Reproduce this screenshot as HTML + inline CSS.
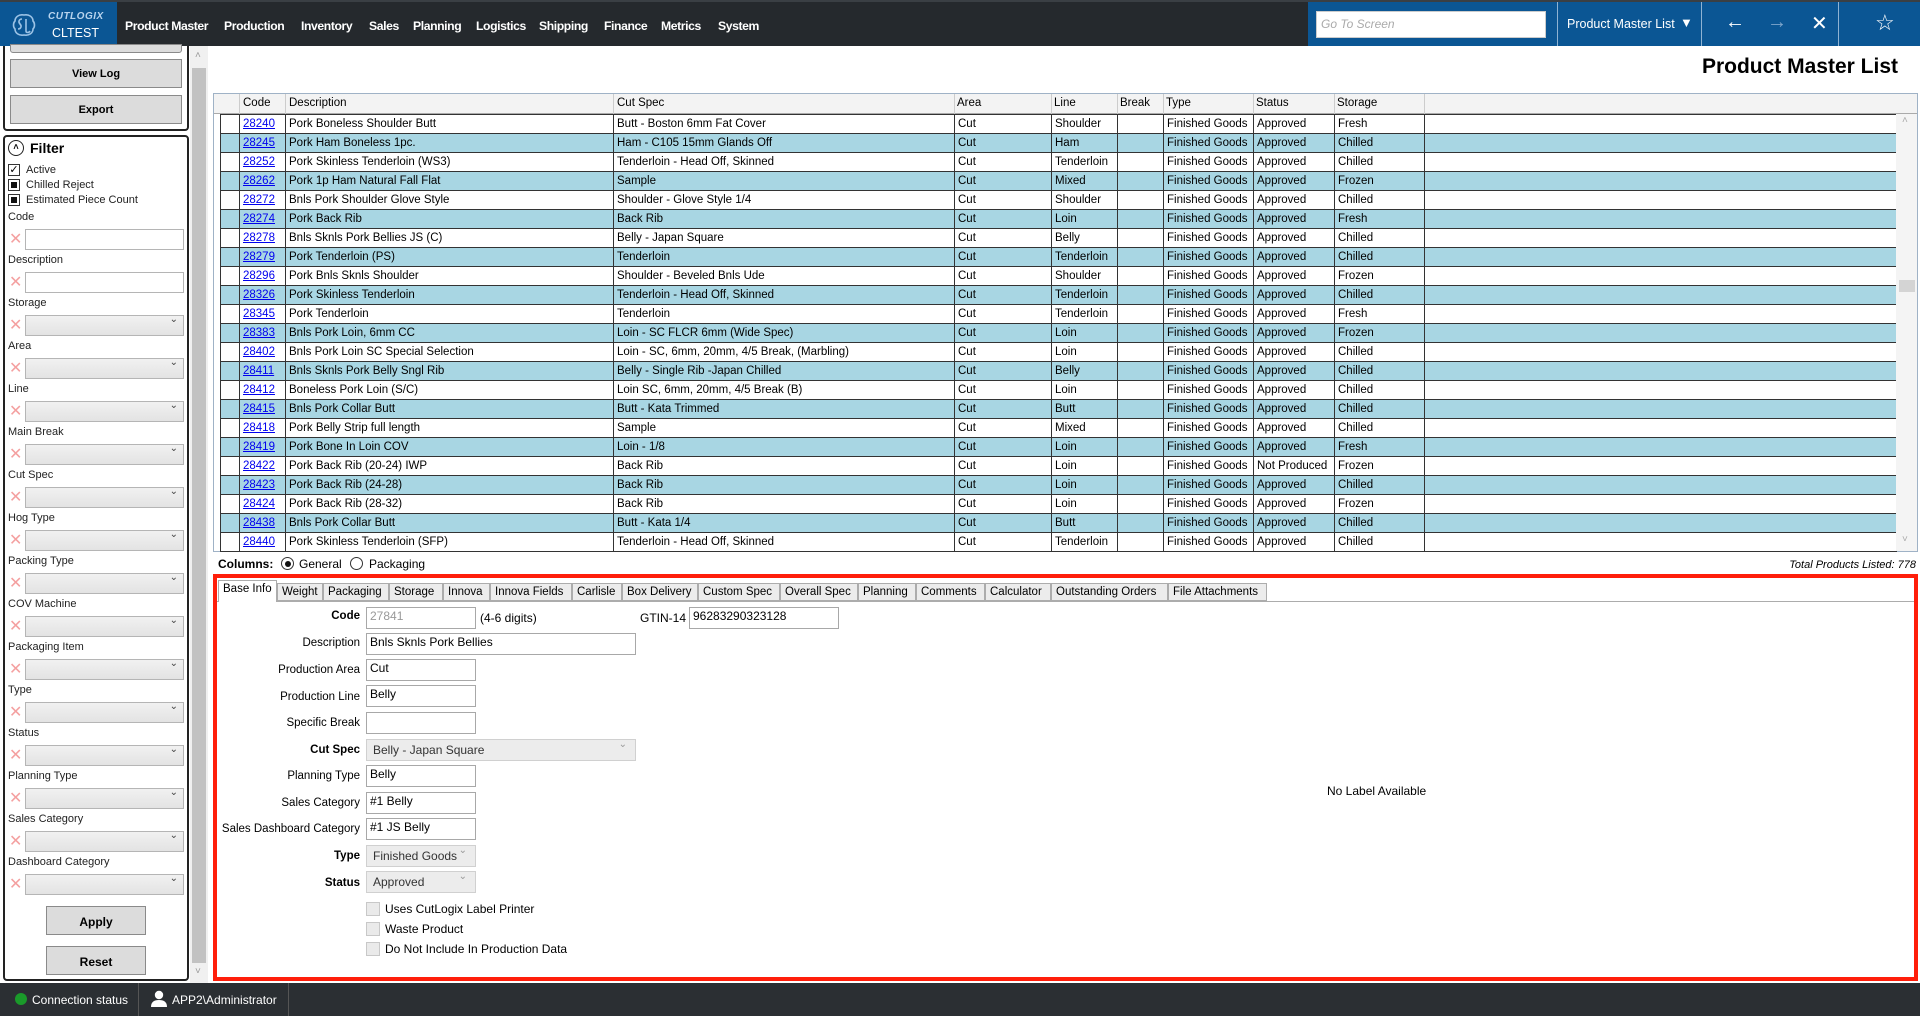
<!DOCTYPE html>
<html><head><meta charset="utf-8">
<style>
*{box-sizing:border-box;margin:0;padding:0}
body{width:1920px;height:1016px;overflow:hidden;background:#fff;font-family:"Liberation Sans",sans-serif;font-size:12px;color:#000;position:relative}
.a{position:absolute}
#hdr{left:0;top:0;width:1920px;height:46px;background:#25292d;border-top:2px solid #3a3f44}
.nav{position:absolute;top:17px;color:#fff;font-weight:bold;font-size:12.2px;letter-spacing:-0.4px}
.sep{position:absolute;top:0;width:1px;height:44px;background:#8fb3d3}
.btn{position:absolute;background:#dcdcdc;border:1px solid #8a8a8a;font-weight:bold;font-size:11px;text-align:center}
.flab{position:absolute;left:8px;font-size:11px;color:#222}
.fx{position:absolute;left:9px;color:#f4a0a0;font-size:16px;line-height:16px}
.fin{position:absolute;left:25px;width:159px;height:21px;border:1px solid #b5b5b5;background:#fff}
.fdd{background:linear-gradient(#f1f1f1,#e3e3e3)}
.fdd:after{content:"\2304";position:absolute;right:5px;top:-2px;font-size:10px;color:#444}
table.g{border-collapse:collapse;table-layout:fixed;position:absolute;left:220px;top:114px;font-size:11.5px}
table.g td{height:19px;border:1px solid #333;padding:0 3px;white-space:nowrap;overflow:hidden;line-height:17px}
table.g tr.b td{background:#a8d6e3}
table.g td.c a{color:#0000ee;text-decoration:underline}
.hd{position:absolute;top:97px;font-size:11.5px}
.tab{position:absolute;top:583px;height:18px;border:1px solid #acacac;background:#ececec;font-size:11.5px;padding:2px 4px 0 4px;white-space:nowrap}
.lbl{position:absolute;right:1560px;font-size:11.5px;text-align:right;white-space:nowrap}
.inp{position:absolute;left:366px;height:22px;border:1px solid #a8a8a8;background:#fff;font-size:12px;padding:1px 3px}
.dd{background:#ececec;border-color:#d0d0d0;color:#333;padding-left:6px}
.dd:after{content:"\2304";position:absolute;right:8px;top:-1px;font-size:10px;color:#999}
.cb{position:absolute;left:366px;width:14px;height:14px;border:1px solid #c8c8c8;background:#eaeaea}
.cbl{position:absolute;left:385px;font-size:12px}
</style></head><body>

<div id="hdr" class="a">
  <div class="a" style="left:0;top:0;width:117px;height:44px;background:#0b5694"></div>
  <svg class="a" style="left:11px;top:10px" width="26" height="26" viewBox="0 0 26 26" fill="none" stroke="#9cc3e6" stroke-width="1.6"><path d="M13 3C8 2 4 5 4 9c-2 2-2 6 0 8 0 4 4 7 9 6 5 1 9-2 9-6 2-2 2-6 0-8 0-4-4-7-9-6z"/><path d="M11 7c-3 0-4 3-2 5s1 5-2 5M15 7v12c0 2 3 2 4 0"/></svg>
  <div class="a" style="left:48px;top:9px;color:#b8d4ee;font-weight:bold;font-style:italic;font-size:10px;letter-spacing:0.5px">CUTLOGIX</div>
  <div class="a" style="left:52px;top:24px;color:#fff;font-size:12.5px">CLTEST</div>
  <div class="nav" style="left:125px">Product Master</div>
  <div class="nav" style="left:224px">Production</div>
  <div class="nav" style="left:301px">Inventory</div>
  <div class="nav" style="left:369px">Sales</div>
  <div class="nav" style="left:413px">Planning</div>
  <div class="nav" style="left:476px">Logistics</div>
  <div class="nav" style="left:539px">Shipping</div>
  <div class="nav" style="left:604px">Finance</div>
  <div class="nav" style="left:661px">Metrics</div>
  <div class="nav" style="left:718px">System</div>
  <div class="a" style="left:1308px;top:0;width:612px;height:44px;background:#0b5694"></div>
  <div class="a" style="left:1316px;top:9px;width:230px;height:27px;background:#fff;border:1px solid #ccc;color:#aaa;font-style:italic;font-size:12px;padding:5px 4px">Go To Screen</div>
  <div class="sep" style="left:1557px"></div>
  <div class="a" style="left:1567px;top:15px;color:#fff;font-size:12.5px">Product Master List</div>
  <div class="a" style="left:1680px;top:13px;color:#fff;font-size:13px">&#9660;</div>
  <div class="sep" style="left:1701px"></div>
  <div class="a" style="left:1725px;top:9px;color:#fff;font-size:20px">&#8592;</div>
  <div class="a" style="left:1767px;top:9px;color:#7fa6cc;font-size:20px">&#8594;</div>
  <div class="a" style="left:1811px;top:9px;color:#fff;font-size:20px">&#10005;</div>
  <div class="sep" style="left:1838px"></div>
  <div class="a" style="left:1875px;top:8px;color:#fff;font-size:22px">&#9734;</div>
</div>

<!-- sidebar -->
<div class="a" style="left:0;top:46px;width:190px;height:937px;background:#fff"></div>
<div class="a" style="left:3px;top:46px;width:186px;height:85px;border-left:2px solid #222;border-right:2px solid #222;border-bottom:2px solid #222;border-radius:0 0 4px 4px"></div>
<div class="btn" style="left:10px;top:44px;width:172px;height:9px;border-radius:0 0 3px 3px"></div>
<div class="btn" style="left:10px;top:59px;width:172px;height:29px;padding-top:8px">View Log</div>
<div class="btn" style="left:10px;top:95px;width:172px;height:29px;padding-top:8px">Export</div>
<div class="a" style="left:3px;top:135px;width:186px;height:846px;border:2px solid #222;border-radius:4px"></div>
<div class="a" style="left:8px;top:140px;width:16px;height:16px;border:1.5px solid #222;border-radius:50%;font-size:9px;text-align:center;line-height:13px;font-weight:bold">&#708;</div>
<div class="a" style="left:30px;top:140px;font-weight:bold;font-size:14px">Filter</div>
<div class="a" style="left:8px;top:164px;width:12px;height:12px;border:1px solid #333;font-size:11px;line-height:10px;text-align:center">&#10003;</div>
<div class="flab" style="left:26px;top:164px">Active</div>
<div class="a" style="left:8px;top:179px;width:12px;height:12px;border:1px solid #333;background:#fff"><div style="margin:2px;width:6px;height:6px;background:#111"></div></div>
<div class="flab" style="left:26px;top:179px">Chilled Reject</div>
<div class="a" style="left:8px;top:194px;width:12px;height:12px;border:1px solid #333;background:#fff"><div style="margin:2px;width:6px;height:6px;background:#111"></div></div>
<div class="flab" style="left:26px;top:194px">Estimated Piece Count</div>

<div class="flab" style="top:211px">Code</div><div class="fx" style="top:232px">&#10005;</div><div class="fin" style="top:229px"></div>
<div class="flab" style="top:254px">Description</div><div class="fx" style="top:275px">&#10005;</div><div class="fin" style="top:272px"></div>
<div class="flab" style="top:297px">Storage</div><div class="fx" style="top:318px">&#10005;</div><div class="fin fdd" style="top:315px"></div>
<div class="flab" style="top:340px">Area</div><div class="fx" style="top:361px">&#10005;</div><div class="fin fdd" style="top:358px"></div>
<div class="flab" style="top:383px">Line</div><div class="fx" style="top:404px">&#10005;</div><div class="fin fdd" style="top:401px"></div>
<div class="flab" style="top:426px">Main Break</div><div class="fx" style="top:447px">&#10005;</div><div class="fin fdd" style="top:444px"></div>
<div class="flab" style="top:469px">Cut Spec</div><div class="fx" style="top:490px">&#10005;</div><div class="fin fdd" style="top:487px"></div>
<div class="flab" style="top:512px">Hog Type</div><div class="fx" style="top:533px">&#10005;</div><div class="fin fdd" style="top:530px"></div>
<div class="flab" style="top:555px">Packing Type</div><div class="fx" style="top:576px">&#10005;</div><div class="fin fdd" style="top:573px"></div>
<div class="flab" style="top:598px">COV Machine</div><div class="fx" style="top:619px">&#10005;</div><div class="fin fdd" style="top:616px"></div>
<div class="flab" style="top:641px">Packaging Item</div><div class="fx" style="top:662px">&#10005;</div><div class="fin fdd" style="top:659px"></div>
<div class="flab" style="top:684px">Type</div><div class="fx" style="top:705px">&#10005;</div><div class="fin fdd" style="top:702px"></div>
<div class="flab" style="top:727px">Status</div><div class="fx" style="top:748px">&#10005;</div><div class="fin fdd" style="top:745px"></div>
<div class="flab" style="top:770px">Planning Type</div><div class="fx" style="top:791px">&#10005;</div><div class="fin fdd" style="top:788px"></div>
<div class="flab" style="top:813px">Sales Category</div><div class="fx" style="top:834px">&#10005;</div><div class="fin fdd" style="top:831px"></div>
<div class="flab" style="top:856px">Dashboard Category</div><div class="fx" style="top:877px">&#10005;</div><div class="fin fdd" style="top:874px"></div>
<div class="btn" style="left:46px;top:906px;width:100px;height:29px;padding-top:8px;font-size:12px">Apply</div>
<div class="btn" style="left:46px;top:946px;width:100px;height:29px;padding-top:8px;font-size:12px">Reset</div>
<!-- sidebar scrollbar -->
<div class="a" style="left:190px;top:46px;width:18px;height:937px;background:#f0f0f0"></div>
<div class="a" style="left:192px;top:68px;width:14px;height:895px;background:#c2c2c2"></div>
<div class="a" style="left:195px;top:50px;color:#999;font-size:10px">&#708;</div>
<div class="a" style="left:195px;top:966px;color:#999;font-size:10px">&#709;</div>

<!-- title -->
<div class="a" style="right:22px;top:55px;font-weight:bold;font-size:21px">Product Master List</div>

<!-- grid -->
<div class="a" style="left:213px;top:93px;width:1705px;height:459px;border:1px solid #9fb2c6"></div>
<div class="a" style="left:214px;top:94px;width:1703px;height:20px;background:#f3f3f3;border-bottom:1px solid #aaa"></div>
<div class="a" style="left:239px;top:94px;width:1px;height:20px;background:#ccc"></div>
<div class="a" style="left:285px;top:94px;width:1px;height:20px;background:#ccc"></div>
<div class="a" style="left:613px;top:94px;width:1px;height:20px;background:#ccc"></div>
<div class="a" style="left:954px;top:94px;width:1px;height:20px;background:#ccc"></div>
<div class="a" style="left:1051px;top:94px;width:1px;height:20px;background:#ccc"></div>
<div class="a" style="left:1117px;top:94px;width:1px;height:20px;background:#ccc"></div>
<div class="a" style="left:1163px;top:94px;width:1px;height:20px;background:#ccc"></div>
<div class="a" style="left:1253px;top:94px;width:1px;height:20px;background:#ccc"></div>
<div class="a" style="left:1334px;top:94px;width:1px;height:20px;background:#ccc"></div>
<div class="a" style="left:1424px;top:94px;width:1px;height:20px;background:#ccc"></div>
<div class="hd" style="left:243px">Code</div>
<div class="hd" style="left:289px">Description</div>
<div class="hd" style="left:617px">Cut Spec</div>
<div class="hd" style="left:957px">Area</div>
<div class="hd" style="left:1054px">Line</div>
<div class="hd" style="left:1120px">Break</div>
<div class="hd" style="left:1166px">Type</div>
<div class="hd" style="left:1256px">Status</div>
<div class="hd" style="left:1337px">Storage</div>
<table class="g">
<colgroup><col style="width:19px"><col style="width:46px"><col style="width:328px"><col style="width:341px"><col style="width:97px"><col style="width:66px"><col style="width:46px"><col style="width:90px"><col style="width:81px"><col style="width:90px"><col style="width:472px"></colgroup>
<tr><td></td><td class="c"><a>28240</a></td><td>Pork Boneless Shoulder Butt</td><td>Butt - Boston 6mm Fat Cover</td><td>Cut</td><td>Shoulder</td><td></td><td>Finished Goods</td><td>Approved</td><td>Fresh</td><td></td></tr>
<tr class="b"><td></td><td class="c"><a>28245</a></td><td>Pork Ham Boneless 1pc.</td><td>Ham - C105 15mm Glands Off</td><td>Cut</td><td>Ham</td><td></td><td>Finished Goods</td><td>Approved</td><td>Chilled</td><td></td></tr>
<tr><td></td><td class="c"><a>28252</a></td><td>Pork Skinless Tenderloin (WS3)</td><td>Tenderloin - Head Off, Skinned</td><td>Cut</td><td>Tenderloin</td><td></td><td>Finished Goods</td><td>Approved</td><td>Chilled</td><td></td></tr>
<tr class="b"><td></td><td class="c"><a>28262</a></td><td>Pork 1p Ham Natural Fall Flat</td><td>Sample</td><td>Cut</td><td>Mixed</td><td></td><td>Finished Goods</td><td>Approved</td><td>Frozen</td><td></td></tr>
<tr><td></td><td class="c"><a>28272</a></td><td>Bnls Pork Shoulder Glove Style</td><td>Shoulder - Glove Style 1/4</td><td>Cut</td><td>Shoulder</td><td></td><td>Finished Goods</td><td>Approved</td><td>Chilled</td><td></td></tr>
<tr class="b"><td></td><td class="c"><a>28274</a></td><td>Pork Back Rib</td><td>Back Rib</td><td>Cut</td><td>Loin</td><td></td><td>Finished Goods</td><td>Approved</td><td>Fresh</td><td></td></tr>
<tr><td></td><td class="c"><a>28278</a></td><td>Bnls Sknls Pork Bellies JS (C)</td><td>Belly - Japan Square</td><td>Cut</td><td>Belly</td><td></td><td>Finished Goods</td><td>Approved</td><td>Chilled</td><td></td></tr>
<tr class="b"><td></td><td class="c"><a>28279</a></td><td>Pork Tenderloin (PS)</td><td>Tenderloin</td><td>Cut</td><td>Tenderloin</td><td></td><td>Finished Goods</td><td>Approved</td><td>Chilled</td><td></td></tr>
<tr><td></td><td class="c"><a>28296</a></td><td>Pork Bnls Sknls Shoulder</td><td>Shoulder - Beveled Bnls Ude</td><td>Cut</td><td>Shoulder</td><td></td><td>Finished Goods</td><td>Approved</td><td>Frozen</td><td></td></tr>
<tr class="b"><td></td><td class="c"><a>28326</a></td><td>Pork Skinless Tenderloin</td><td>Tenderloin - Head Off, Skinned</td><td>Cut</td><td>Tenderloin</td><td></td><td>Finished Goods</td><td>Approved</td><td>Chilled</td><td></td></tr>
<tr><td></td><td class="c"><a>28345</a></td><td>Pork Tenderloin</td><td>Tenderloin</td><td>Cut</td><td>Tenderloin</td><td></td><td>Finished Goods</td><td>Approved</td><td>Fresh</td><td></td></tr>
<tr class="b"><td></td><td class="c"><a>28383</a></td><td>Bnls Pork Loin, 6mm CC</td><td>Loin - SC FLCR 6mm (Wide Spec)</td><td>Cut</td><td>Loin</td><td></td><td>Finished Goods</td><td>Approved</td><td>Frozen</td><td></td></tr>
<tr><td></td><td class="c"><a>28402</a></td><td>Bnls Pork Loin SC Special Selection</td><td>Loin - SC, 6mm, 20mm, 4/5 Break, (Marbling)</td><td>Cut</td><td>Loin</td><td></td><td>Finished Goods</td><td>Approved</td><td>Chilled</td><td></td></tr>
<tr class="b"><td></td><td class="c"><a>28411</a></td><td>Bnls Sknls Pork Belly Sngl Rib</td><td>Belly - Single Rib -Japan Chilled</td><td>Cut</td><td>Belly</td><td></td><td>Finished Goods</td><td>Approved</td><td>Chilled</td><td></td></tr>
<tr><td></td><td class="c"><a>28412</a></td><td>Boneless Pork Loin (S/C)</td><td>Loin SC, 6mm, 20mm, 4/5 Break (B)</td><td>Cut</td><td>Loin</td><td></td><td>Finished Goods</td><td>Approved</td><td>Chilled</td><td></td></tr>
<tr class="b"><td></td><td class="c"><a>28415</a></td><td>Bnls Pork Collar Butt</td><td>Butt - Kata Trimmed</td><td>Cut</td><td>Butt</td><td></td><td>Finished Goods</td><td>Approved</td><td>Chilled</td><td></td></tr>
<tr><td></td><td class="c"><a>28418</a></td><td>Pork Belly Strip full length</td><td>Sample</td><td>Cut</td><td>Mixed</td><td></td><td>Finished Goods</td><td>Approved</td><td>Chilled</td><td></td></tr>
<tr class="b"><td></td><td class="c"><a>28419</a></td><td>Pork Bone In Loin COV</td><td>Loin - 1/8</td><td>Cut</td><td>Loin</td><td></td><td>Finished Goods</td><td>Approved</td><td>Fresh</td><td></td></tr>
<tr><td></td><td class="c"><a>28422</a></td><td>Pork Back Rib (20-24) IWP</td><td>Back Rib</td><td>Cut</td><td>Loin</td><td></td><td>Finished Goods</td><td>Not Produced</td><td>Frozen</td><td></td></tr>
<tr class="b"><td></td><td class="c"><a>28423</a></td><td>Pork Back Rib (24-28)</td><td>Back Rib</td><td>Cut</td><td>Loin</td><td></td><td>Finished Goods</td><td>Approved</td><td>Chilled</td><td></td></tr>
<tr><td></td><td class="c"><a>28424</a></td><td>Pork Back Rib (28-32)</td><td>Back Rib</td><td>Cut</td><td>Loin</td><td></td><td>Finished Goods</td><td>Approved</td><td>Frozen</td><td></td></tr>
<tr class="b"><td></td><td class="c"><a>28438</a></td><td>Bnls Pork Collar Butt</td><td>Butt - Kata 1/4</td><td>Cut</td><td>Butt</td><td></td><td>Finished Goods</td><td>Approved</td><td>Chilled</td><td></td></tr>
<tr><td></td><td class="c"><a>28440</a></td><td>Pork Skinless Tenderloin (SFP)</td><td>Tenderloin - Head Off, Skinned</td><td>Cut</td><td>Tenderloin</td><td></td><td>Finished Goods</td><td>Approved</td><td>Chilled</td><td></td></tr>
</table>
<div class="a" style="left:1896px;top:114px;width:21px;height:437px;background:#f4f4f4"></div>
<div class="a" style="left:1899px;top:280px;width:16px;height:12px;background:#d4d4d4"></div>
<div class="a" style="left:1902px;top:115px;color:#aaa;font-size:10px">&#708;</div>
<div class="a" style="left:1902px;top:534px;color:#aaa;font-size:10px">&#709;</div>

<!-- columns row -->
<div class="a" style="left:218px;top:557px;font-weight:bold;font-size:12px">Columns:</div>
<div class="a" style="left:281px;top:557px;width:13px;height:13px;border:1px solid #333;border-radius:50%"><div style="margin:2.5px;width:6px;height:6px;border-radius:50%;background:#111"></div></div>
<div class="a" style="left:299px;top:557px;font-size:12px">General</div>
<div class="a" style="left:350px;top:557px;width:13px;height:13px;border:1px solid #333;border-radius:50%"></div>
<div class="a" style="left:369px;top:557px;font-size:12px">Packaging</div>
<div class="a" style="right:4px;top:559px;font-style:italic;font-size:11px">Total Products Listed: 778</div>

<!-- detail box -->
<div class="a" style="left:213px;top:574px;width:1705px;height:407px;border:4px solid #ff1e0a"></div>
<div class="a" style="left:217px;top:601px;width:1697px;height:1px;background:#acacac"></div>
<div class="tab" style="left:218px;top:580px;height:22px;width:59px;background:#fff;border-bottom:none">Base Info</div>
<div class="tab" style="left:277px;width:46px">Weight</div>
<div class="tab" style="left:323px;width:66px">Packaging</div>
<div class="tab" style="left:389px;width:54px">Storage</div>
<div class="tab" style="left:443px;width:47px">Innova</div>
<div class="tab" style="left:490px;width:82px">Innova Fields</div>
<div class="tab" style="left:572px;width:50px">Carlisle</div>
<div class="tab" style="left:622px;width:76px">Box Delivery</div>
<div class="tab" style="left:698px;width:82px">Custom Spec</div>
<div class="tab" style="left:780px;width:78px">Overall Spec</div>
<div class="tab" style="left:858px;width:58px">Planning</div>
<div class="tab" style="left:916px;width:69px">Comments</div>
<div class="tab" style="left:985px;width:66px">Calculator</div>
<div class="tab" style="left:1051px;width:117px">Outstanding Orders</div>
<div class="tab" style="left:1168px;width:99px">File Attachments</div>

<div class="lbl" style="top:610px;font-weight:bold">Code</div>
<div class="inp" style="top:607px;width:110px;color:#999">27841</div>
<div class="a" style="left:480px;top:611px;font-size:12px">(4-6 digits)</div>
<div class="a" style="left:640px;top:611px;font-size:12px">GTIN-14</div>
<div class="inp" style="left:689px;top:607px;width:150px">96283290323128</div>
<div class="lbl" style="top:637px">Description</div>
<div class="inp" style="top:633px;width:270px">Bnls Sknls Pork Bellies</div>
<div class="lbl" style="top:664px">Production Area</div>
<div class="inp" style="top:659px;width:110px">Cut</div>
<div class="lbl" style="top:691px">Production Line</div>
<div class="inp" style="top:685px;width:110px">Belly</div>
<div class="lbl" style="top:717px">Specific Break</div>
<div class="inp" style="top:712px;width:110px"></div>
<div class="lbl" style="top:744px;font-weight:bold">Cut Spec</div>
<div class="inp dd" style="top:739px;width:270px;padding-top:3px">Belly - Japan Square</div>
<div class="lbl" style="top:770px">Planning Type</div>
<div class="inp" style="top:765px;width:110px">Belly</div>
<div class="lbl" style="top:797px">Sales Category</div>
<div class="inp" style="top:792px;width:110px">#1 Belly</div>
<div class="lbl" style="top:823px">Sales Dashboard Category</div>
<div class="inp" style="top:818px;width:110px">#1 JS Belly</div>
<div class="lbl" style="top:850px;font-weight:bold">Type</div>
<div class="inp dd" style="top:845px;width:110px;padding-top:3px">Finished Goods</div>
<div class="lbl" style="top:877px;font-weight:bold">Status</div>
<div class="inp dd" style="top:871px;width:110px;padding-top:3px">Approved</div>
<div class="cb" style="top:902px"></div><div class="cbl" style="top:902px">Uses CutLogix Label Printer</div>
<div class="cb" style="top:922px"></div><div class="cbl" style="top:922px">Waste Product</div>
<div class="cb" style="top:942px"></div><div class="cbl" style="top:942px">Do Not Include In Production Data</div>
<div class="a" style="left:1327px;top:784px;font-size:12px">No Label Available</div>

<!-- status bar -->
<div class="a" style="left:0;top:983px;width:1920px;height:33px;background:#2b2f33"></div>
<div class="a" style="left:15px;top:993px;width:12px;height:12px;border-radius:50%;background:#1a9a2a"></div>
<div class="a" style="left:32px;top:993px;color:#fff;font-size:12px">Connection status</div>
<div class="a" style="left:138px;top:983px;width:1px;height:33px;background:#555"></div>
<svg class="a" style="left:151px;top:990px" width="16" height="17" viewBox="0 0 16 17"><circle cx="8" cy="5" r="4.2" fill="#fff"/><path d="M0 17c0-5 3-7 8-7s8 2 8 7z" fill="#fff"/></svg>
<div class="a" style="left:172px;top:993px;color:#fff;font-size:12px">APP2\Administrator</div>
<div class="a" style="left:288px;top:983px;width:1px;height:33px;background:#555"></div>
</body></html>
